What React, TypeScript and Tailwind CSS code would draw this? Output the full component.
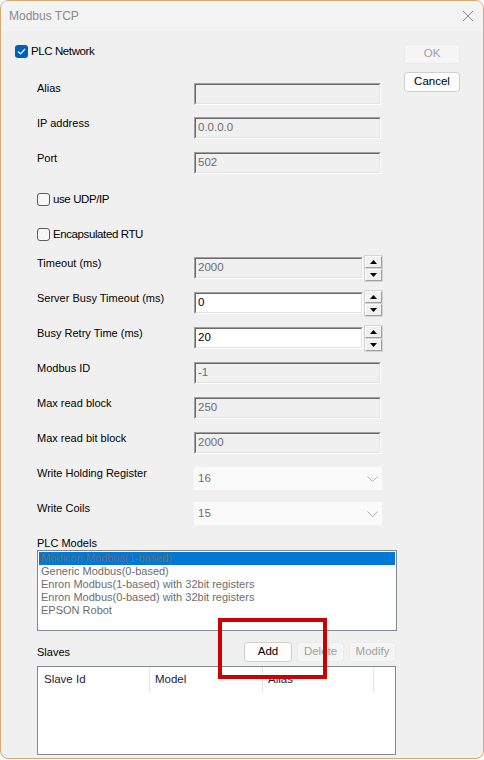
import type { ReactNode } from "react";

const font = "font-['Liberation_Sans',Arial,sans-serif]";

function Box({ value, enabled = false, width = "w-[187px]" }: { value: string; enabled?: boolean; width?: string }) {
  return (
    <div
      className={`${width} h-[22px] border border-t-[#a0a0a0] border-l-[#a0a0a0] border-b-white border-r-white`}
    >
      <div
        className={`flex h-full items-center border border-t-[#696969] border-l-[#696969] border-b-[#e3e3e3] border-r-[#e3e3e3] pl-[2px] text-[11.5px] ${
          enabled ? "bg-white text-black" : "bg-[#f0f0f0] text-[#6d6d6d]"
        }`}
      >
        {value}
      </div>
    </div>
  );
}

function SpinBtn({ up }: { up?: boolean }) {
  return (
    <div className="flex h-[12px] w-[17px] items-center justify-center border border-t-white border-l-white border-b-[#a0a0a0] border-r-[#a0a0a0] bg-[#f0f0f0] shadow-[0_0_0_1px_#d4d4d4]">
      <svg width="7" height="4" viewBox="0 0 7 4">
        {up ? <path d="M0 4 L3.5 0 L7 4 Z" fill="#000" /> : <path d="M0 0 L3.5 4 L7 0 Z" fill="#000" />}
      </svg>
    </div>
  );
}

function Spin({ value, enabled }: { value: string; enabled?: boolean }) {
  return (
    <div className="flex items-start gap-[2px]">
      <Box value={value} enabled={enabled} width="w-[169px]" />
      <div className="-mt-[1px] flex flex-col gap-[1px]">
        <SpinBtn up />
        <SpinBtn />
      </div>
    </div>
  );
}

function Select({ value }: { value: string }) {
  return (
    <div className="flex h-[23px] w-[188px] items-center justify-between bg-[#fafafa] pl-[4px] pr-[4px] text-[11.5px] text-[#6d6d6d]">
      <span>{value}</span>
      <svg width="11" height="6" viewBox="0 0 11 6">
        <path d="M0.5 0.5 L5.5 5.5 L10.5 0.5" fill="none" stroke="#b0b0b0" strokeWidth="1" />
      </svg>
    </div>
  );
}

function Check({ checked, label }: { checked?: boolean; label: string }) {
  return (
    <div className="flex items-center gap-[3px]">
      {checked ? (
        <div className="flex h-[13px] w-[13px] items-center justify-center rounded-[3px] bg-[#005fb8]">
          <svg width="9" height="7" viewBox="0 0 9 7">
            <path d="M1 3.5 L3.5 6 L8 1" fill="none" stroke="#fff" strokeWidth="1.2" />
          </svg>
        </div>
      ) : (
        <div className="h-[13px] w-[13px] rounded-[3px] border border-[#5c5c5c] bg-[#f7f7f7]" />
      )}
      <span className="text-[11.5px] leading-[13px] tracking-[-0.4px] text-black">{label}</span>
    </div>
  );
}

function Row({ label, children }: { label: string; children?: ReactNode }) {
  return (
    <div className="flex h-[35px] items-start">
      <span className="w-[157px] text-[11px] leading-[13px] text-black">{label}</span>
      <div>{children}</div>
    </div>
  );
}

function Btn({ label, disabled, width = "w-[56px]" }: { label: string; disabled?: boolean; width?: string }) {
  return (
    <div
      className={`flex h-[20px] ${width} items-center justify-center rounded-[3px] border text-[11.5px] ${
        disabled ? "border-[#ebebeb] bg-[#f5f5f5] text-[#a0a0a0]" : "border-[#d0d0d0] bg-[#fdfdfd] text-black"
      }`}
    >
      {label}
    </div>
  );
}

const models = [
  "Modicon Modbus(1-based)",
  "Generic Modbus(0-based)",
  "Enron Modbus(1-based) with 32bit registers",
  "Enron Modbus(0-based) with 32bit registers",
  "EPSON Robot",
];

export default function App() {
  return (
    <div className={`${font} relative h-[760px] w-[484px] overflow-hidden bg-white`}>
      <div className="flex h-[759px] w-[484px] flex-col overflow-hidden rounded-[8px] border border-[#dba872] bg-[#f0f0f0]">
        {/* title bar */}
        <div className="flex h-[30px] shrink-0 items-center justify-between bg-[#f3f3f3] pl-[8px] pr-[9px]">
          <span className="text-[12px] text-[#8a8a8a]">Modbus TCP</span>
          <svg width="12" height="12" viewBox="0 0 12 12">
            <path d="M1 1 L11 11 M11 1 L1 11" stroke="#8a8a8a" strokeWidth="1" />
          </svg>
        </div>

        <div className="flex flex-1 pl-[14px]">
          {/* form column */}
          <div className="w-[382px] pt-[14px]">
            <Check checked label="PLC Network" />
            <div className="pl-[22px] pt-[24px]">
              <Row label="Alias">
                <div className="mt-[1px]">
                  <Box value="" />
                </div>
              </Row>
              <Row label="IP address">
                <Box value="0.0.0.0" />
              </Row>
              <Row label="Port">
                <Box value="502" />
              </Row>
              <div className="flex h-[35px] items-start pt-[6px]">
                <Check label="use UDP/IP" />
              </div>
              <div className="flex h-[35px] items-start pt-[6px]">
                <Check label="Encapsulated RTU" />
              </div>
              <Row label="Timeout (ms)">
                <Spin value="2000" />
              </Row>
              <Row label="Server Busy Timeout (ms)">
                <Spin value="0" enabled />
              </Row>
              <Row label="Busy Retry Time (ms)">
                <Spin value="20" enabled />
              </Row>
              <Row label="Modbus ID">
                <Box value="-1" />
              </Row>
              <Row label="Max read block">
                <Box value="250" />
              </Row>
              <Row label="Max read bit block">
                <Box value="2000" />
              </Row>
              <Row label="Write Holding Register">
                <Select value="16" />
              </Row>
              <Row label="Write Coils">
                <Select value="15" />
              </Row>

              <div className="text-[11px] leading-[13px] text-black">PLC Models</div>
              <div className="h-[81px] w-[360px] border border-[#828790] bg-white p-[1px]">
                {models.map((m, i) => (
                  <div
                    key={m}
                    className={`h-[13px] pl-[2px] text-[11px] leading-[13px] text-[#6d6d6d] ${
                      i === 0 ? "bg-[#0078d7]" : ""
                    }`}
                  >
                    {m}
                  </div>
                ))}
              </div>

              <div className="mt-[11px] flex h-[20px] items-center justify-between pr-[1px]">
                <span className="text-[11px] leading-[13px] text-black">Slaves</span>
                <div className="flex gap-[5px]">
                  <Btn label="Add" width="w-[48px]" />
                  <Btn label="Delete" disabled width="w-[47px]" />
                  <Btn label="Modify" disabled width="w-[47px]" />
                </div>
              </div>
              <div className="mt-[4px] h-[89px] w-[359px] border border-[#828790] bg-white">
                <div className="flex h-[25px] text-[11.5px] text-[#1b1b3a]">
                  <div className="flex w-[112px] items-center border-r border-[#e5e5e5] pl-[6px]">Slave Id</div>
                  <div className="flex w-[113px] items-center border-r border-[#e5e5e5] pl-[5px]">Model</div>
                  <div className="flex w-[111px] items-center border-r border-[#e5e5e5] pl-[5px]">Alias</div>
                </div>
              </div>
            </div>
          </div>

          {/* button column */}
          <div className="flex flex-col gap-[8px] pl-[7px] pt-[13px]">
            <Btn label="OK" disabled />
            <Btn label="Cancel" />
          </div>
        </div>
      </div>

      {/* annotation */}
      <div className="absolute left-[218px] top-[618px] h-[61px] w-[109px] border-[4px] border-[#cc0000]" />
    </div>
  );
}
